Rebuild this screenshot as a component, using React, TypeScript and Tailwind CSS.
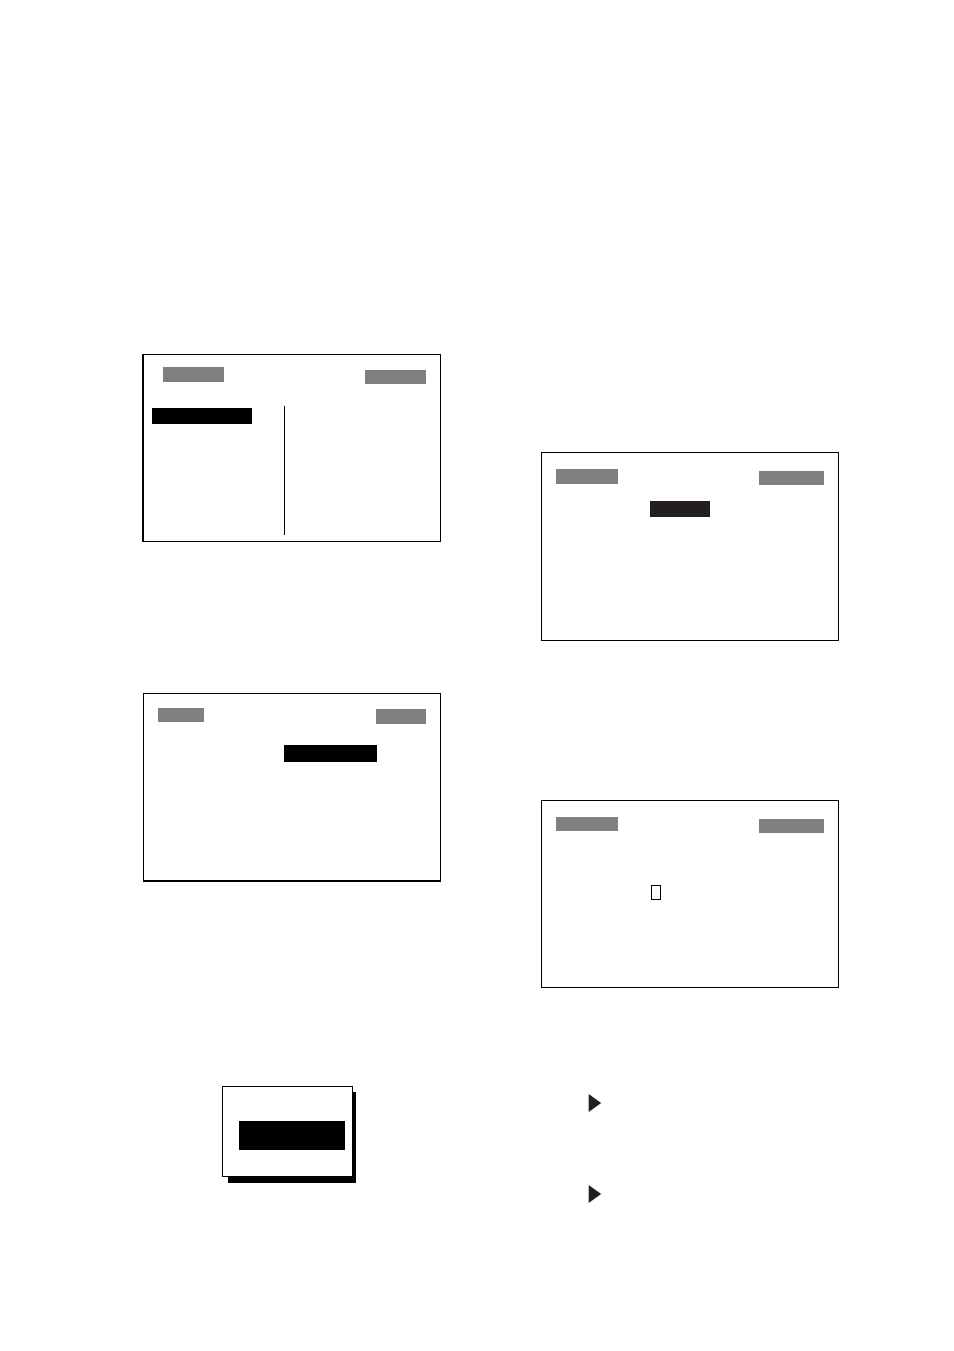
import type { ReactNode } from "react";

function Screen({ className, children }: { className: string; children: ReactNode }) {
  return (
    <section className={`flex flex-col border-black bg-white ${className}`}>{children}</section>
  );
}

function Header({ className, left, right }: { className: string; left: string; right: string }) {
  return (
    <header className={`flex items-start justify-between ${className}`}>
      <div className={`bg-[#808080] ${left}`} />
      <div className={`bg-[#808080] ${right}`} />
    </header>
  );
}

function Arrow() {
  return (
    <svg className="block h-5 w-4" viewBox="0 0 16 20" aria-hidden="true">
      <path d="M1.7 1 L14.2 10 L1.7 19 Z" fill="#231f20" />
    </svg>
  );
}

export default function App() {
  return (
    <main className="grid min-h-screen grid-cols-[299fr_298fr] gap-x-[100px] bg-white pr-[115px] pl-[142px]">
      <div className="flex flex-col pt-[354px]">
        {/* Two-pane menu */}
        <Screen className="h-[188px] border border-l-2">
          <Header
            className="pt-3 pr-3.5 pl-[19px]"
            left="h-[15px] w-[61px]"
            right="mt-[3px] h-3.5 w-[61px]"
          />
          <div className="mt-[22px] mb-1.5 flex flex-1">
            <div className="w-[141px] flex-none border-r border-black pt-[2px] pl-2">
              <div className="h-4 w-[100px] bg-black" />
            </div>
            <div className="flex-1" />
          </div>
        </Screen>

        {/* Settings list */}
        <Screen className="mt-[151px] ml-px h-[189px] border border-b-2">
          <Header
            className="px-3.5 pt-3.5"
            left="h-3.5 w-[46px]"
            right="mt-px h-[15px] w-[50px]"
          />
          <div className="mt-[21px] ml-[140px] h-[17px] w-[93px] bg-black" />
        </Screen>

        {/* Raised pop-up with its drop shadow */}
        <div className="relative isolate mt-[204px] ml-20 w-[131px]">
          <div className="absolute top-1.5 -right-[3px] -bottom-1.5 left-1.5 -z-10 bg-black" />
          <div className="h-[91px] border border-black bg-white pt-[34px] pr-[7px] pl-4">
            <div className="h-[29px] bg-black" />
          </div>
        </div>
      </div>

      <div className="flex flex-col pt-[452px]">
        {/* Option selection */}
        <Screen className="h-[189px] border">
          <Header
            className="px-3.5 pt-4"
            left="h-[15px] w-[62px]"
            right="mt-[2px] h-3.5 w-[65px]"
          />
          <div className="mt-4 ml-[108px] h-4 w-[60px] bg-[#231f20]" />
        </Screen>

        {/* Text entry with a block cursor */}
        <Screen className="mt-[159px] h-[188px] border">
          <Header
            className="px-3.5 pt-4"
            left="h-3.5 w-[62px]"
            right="mt-[2px] h-3.5 w-[65px]"
          />
          <div className="mt-[52px] ml-[109px] h-[15px] w-2.5 border border-black" />
        </Screen>

        <div className="mt-[105px] ml-[46px] flex flex-col gap-[71px]">
          <Arrow />
          <Arrow />
        </div>
      </div>
    </main>
  );
}
